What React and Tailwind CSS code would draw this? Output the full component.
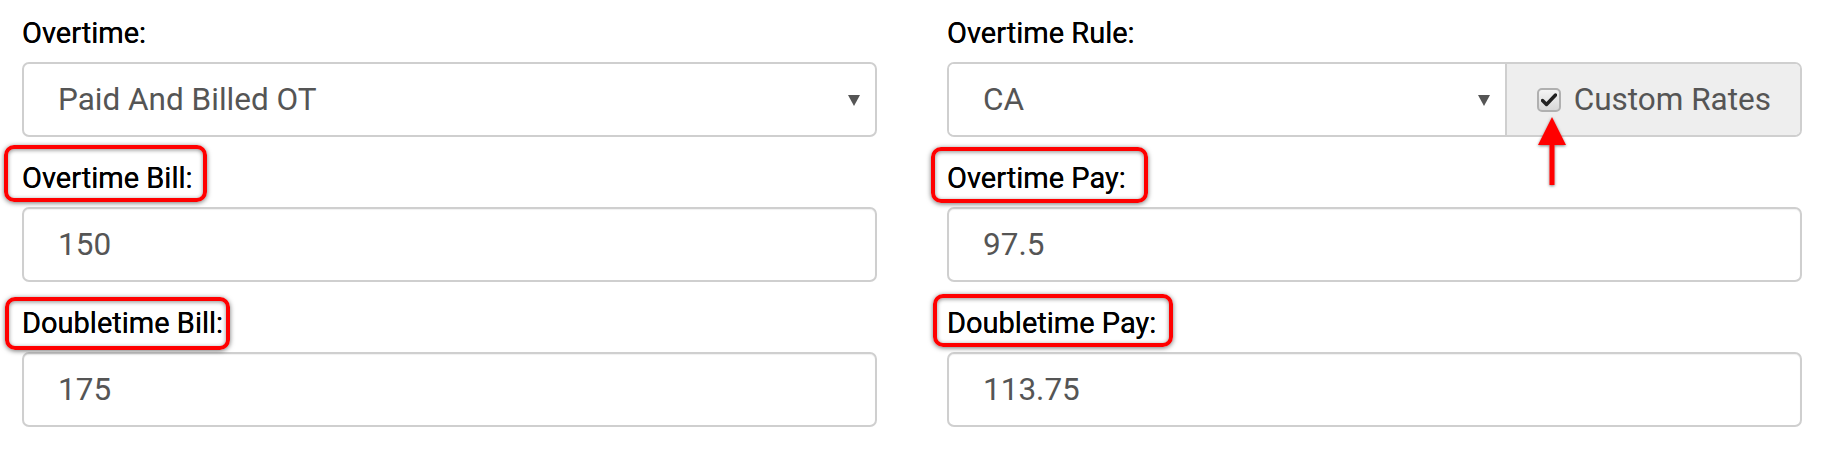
import React from "react";

const FIELDS = [
  { label: "Overtime Bill:", value: "150", box: "-left-[18px] -top-[13px] w-[203px] h-[57px]" },
  { label: "Overtime Pay:", value: "97.5", box: "-left-[16px] -top-[11px] w-[217px] h-[56px]" },
  { label: "Doubletime Bill:", value: "175", box: "-left-[17px] -top-[6px] w-[225px] h-[53px]" },
  { label: "Doubletime Pay:", value: "113.75", box: "-left-[14px] -top-[9px] w-[240px] h-[53px]" },
];

function Caret() {
  return (
    <svg width="12" height="12" viewBox="0 0 12 12" className="shrink-0">
      <path d="M0 1 L12 1 L6 12 Z" fill="#555" />
    </svg>
  );
}

function Label({ children, box }) {
  return (
    <div className="mb-[9px] flex">
      <span className="relative text-[29px] leading-[40px] font-normal text-black [text-shadow:0_0_0.4px_#000]">
        {box && (
          <span
            className={`absolute ${box} rounded-[10px] border-4 border-[#ff0000] shadow-[0_1px_5px_rgba(0,0,0,0.55),inset_0_1px_4px_rgba(0,0,0,0.45)]`}
          />
        )}
        <span className="relative">{children}</span>
      </span>
    </div>
  );
}

function Select({ value, className = "" }) {
  return (
    <div
      className={`flex h-[75px] items-center justify-between bg-white pl-[34px] pr-[15px] text-[31.5px] text-[#555] ${className}`}
    >
      <span>{value}</span>
      <Caret />
    </div>
  );
}

function TextInput({ value }) {
  return (
    <div className="flex h-[75px] items-center rounded-[7px] border-2 border-[#cfcfcf] bg-white pl-[34px] text-[31.5px] text-[#555] shadow-[inset_0_1px_1px_rgba(0,0,0,0.06)]">
      {value}
    </div>
  );
}

function CheckBox() {
  return (
    <span className="flex h-[24px] w-[24px] items-center justify-center rounded-[5px] border-2 border-[#b0b0b0] bg-gradient-to-b from-[#f4f4f4] to-[#d8d8d8]">
      <svg width="16" height="14" viewBox="0 0 16 14">
        <path d="M1.5 7.5 L5.5 11.5 L14.5 2" fill="none" stroke="#222" strokeWidth="3.4" strokeLinecap="round" strokeLinejoin="round" />
      </svg>
    </span>
  );
}

export default function App() {
  return (
    <div
      className="relative h-[452px] w-[1824px] overflow-hidden bg-white px-[22px] pt-[13px]"
      style={{ fontFamily: "Roboto, 'Liberation Sans', sans-serif" }}
    >
      <div className="grid grid-cols-2 gap-x-[70px] gap-y-[21px]">
        <div>
          <Label>Overtime:</Label>
          <Select
            value="Paid And Billed OT"
            className="rounded-[7px] border-2 border-[#cfcfcf]"
          />
        </div>
        <div>
          <Label>Overtime Rule:</Label>
          <div className="flex h-[75px] overflow-hidden rounded-[7px] border-2 border-[#cfcfcf]">
            <Select value="CA" className="h-full flex-1" />
            <div className="flex items-center gap-[13px] border-l-2 border-[#cfcfcf] bg-[#eeeeee] pl-[30px] pr-[29px] text-[31.5px] text-[#555]">
              <CheckBox />
              <span>Custom Rates</span>
            </div>
          </div>
        </div>
        {FIELDS.map((f) => (
          <div key={f.label}>
            <Label box={f.box}>{f.label}</Label>
            <TextInput value={f.value} />
          </div>
        ))}
      </div>

      <svg
        className="absolute left-[1532px] top-[112px]"
        width="40"
        height="80"
        viewBox="0 0 40 80"
      >
        <defs>
          <filter id="sh" x="-50%" y="-50%" width="200%" height="200%">
            <feDropShadow dx="0" dy="1" stdDeviation="1.5" floodColor="#000" floodOpacity="0.5" />
          </filter>
        </defs>
        <g filter="url(#sh)" fill="#ff0000">
          <path d="M20 5 L34 33 L6 33 Z" />
          <rect x="17.5" y="30" width="5" height="43" />
        </g>
      </svg>
    </div>
  );
}
